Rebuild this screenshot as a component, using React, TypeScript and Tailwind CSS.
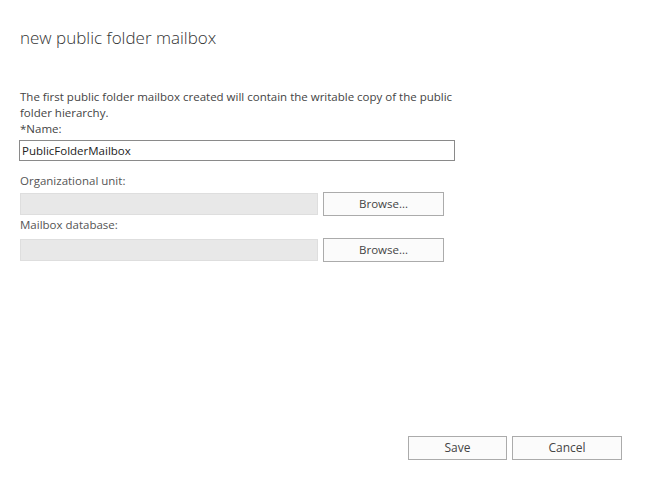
import React from "react";

export default function App() {
  const font = { fontFamily: '"Open Sans", "Noto Sans", sans-serif' };
  return (
    <div className="w-[654px] h-[494px] bg-white relative" style={font}>
      <div className="flex flex-col h-full pl-[20px]">
        <h1 className="pt-[26px] text-[17px] leading-[24px] font-light text-[#333333]">
          new public folder mailbox
        </h1>
        <div className="mt-[39px] w-[440px] text-[11.5px] leading-[16px] text-[#444444]">
          The first public folder mailbox created will contain the writable copy of the public folder hierarchy.
        </div>
        <div className="text-[11.5px] leading-[16px] text-[#444444]">*Name:</div>
        <div className="mt-[3px] -ml-px w-[436px] h-[21px] border border-[#8a8a8a] bg-white flex items-center px-[2px] text-[11.5px] text-[#222222]">
          PublicFolderMailbox
        </div>
        <div className="mt-[12px] text-[11.5px] leading-[16px] text-[#555555]">Organizational unit:</div>
        <div className="mt-[3px] flex items-center gap-[5px]">
          <div className="w-[298px] h-[22px] bg-[#e8e8e8] border border-[#dedede]" />
          <button className="w-[121px] h-[24px] border border-[#ababab] bg-[#fbfbfb] text-[11.5px] text-[#444444]">
            Browse...
          </button>
        </div>
        <div className="mt-[1px] text-[11.5px] leading-[16px] text-[#555555]">Mailbox database:</div>
        <div className="mt-[5px] flex items-center gap-[5px]">
          <div className="w-[298px] h-[22px] bg-[#e8e8e8] border border-[#dedede]" />
          <button className="w-[121px] h-[24px] border border-[#ababab] bg-[#fbfbfb] text-[11.5px] text-[#444444]">
            Browse...
          </button>
        </div>
        <div className="flex-1" />
        <div className="flex justify-end gap-[5px] pr-[32px] pb-[34px]">
          <button className="w-[99px] h-[24px] border border-[#ababab] bg-[#fbfbfb] text-[12px] text-[#444444]">
            Save
          </button>
          <button className="w-[110px] h-[24px] border border-[#ababab] bg-[#fbfbfb] text-[12px] text-[#444444]">
            Cancel
          </button>
        </div>
      </div>
    </div>
  );
}
